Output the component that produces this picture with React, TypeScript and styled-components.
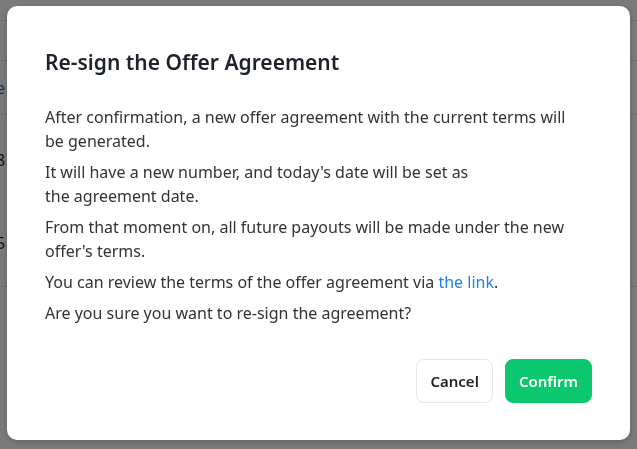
import React from "react";
import styled, { createGlobalStyle } from "styled-components";

const Global = createGlobalStyle`
  html, body { margin: 0; padding: 0; }
  body {
    width: 637px;
    height: 449px;
    overflow: hidden;
    background: #ffffff;
    font-family: "Noto Sans", "Open Sans", sans-serif;
  }
`;

const Page = styled.div`
  width: 637px;
  height: 449px;
  display: flex;
  flex-direction: column;
  font-family: "Noto Sans", sans-serif;
`;

const Row = styled.div<{ $h: number; $line?: boolean }>`
  height: ${(p) => p.$h}px;
  border-bottom: ${(p) => (p.$line === false ? "none" : "1px solid #e6e6e6")};
  display: flex;
  align-items: center;
  font-size: 16px;
  line-height: 22px;
  color: #1e2a3a;
  box-sizing: border-box;
`;

const Stack = styled.div`
  display: flex;
  flex-direction: column;
  align-self: flex-start;
  padding-top: 34px;
  gap: 61px;
`;

const Cell = styled.span<{ $blue?: boolean }>`
  margin-left: -4px;
  color: ${(p) => (p.$blue ? "#2f6fd6" : "#1e2a3a")};
`;

const Overlay = styled.div`
  position: fixed;
  inset: 0;
  background: rgba(0, 0, 0, 0.52);
  display: flex;
  align-items: flex-start;
  justify-content: flex-start;
  padding: 6px 0 0 7px;
  box-sizing: border-box;
`;

const Dialog = styled.div`
  width: 623px;
  height: 434px;
  box-sizing: border-box;
  background: #ffffff;
  border-radius: 10px;
  box-shadow: 0 2px 6px rgba(0, 0, 0, 0.2);
  padding: 38px 38px 37px 38px;
  display: flex;
  flex-direction: column;
`;

const Title = styled.h2`
  margin: 0;
  font-family: "Noto Sans", sans-serif;
  font-size: 21px;
  font-weight: 600;
  line-height: 36px;
  color: #1d222b;
`;

const Body = styled.div`
  margin-top: 25px;
  display: flex;
  flex-direction: column;
  gap: 7px;
  flex: 1;
`;

const Para = styled.p`
  margin: 0;
  font-family: "Noto Sans", sans-serif;
  font-size: 16px;
  line-height: 24px;
  color: #333333;
  max-width: 535px;
`;

const Link = styled.a`
  color: #1f7ef0;
  text-decoration: none;
`;

const Footer = styled.div`
  display: flex;
  justify-content: flex-end;
  gap: 12px;
`;

const Button = styled.button<{ $primary?: boolean }>`
  height: 44px;
  padding: 0 13px;
  border-radius: 8px;
  font-family: "Noto Sans", sans-serif;
  font-size: 15px;
  font-weight: 600;
  cursor: pointer;
  border: 1px solid ${(p) => (p.$primary ? "#0bc76e" : "#e4e6ea")};
  background: ${(p) => (p.$primary ? "#0bc76e" : "#ffffff")};
  color: ${(p) => (p.$primary ? "#ffffff" : "#1d222b")};
`;

export default function App() {
  return (
    <>
      <Global />
      <Page>
        <Row $h={21} />
        <Row $h={40} />
        <Row $h={54}>
          <Cell $blue>e</Cell>
        </Row>
        <Row $h={172}>
          <Stack>
            <Cell>8</Cell>
            <Cell>5</Cell>
          </Stack>
        </Row>
        <Row $h={162} $line={false} />
      </Page>
      <Overlay>
        <Dialog role="dialog">
          <Title>Re-sign the Offer Agreement</Title>
          <Body>
            <Para>
              After confirmation, a new offer agreement with the current terms will be generated.
            </Para>
            <Para>
              It will have a new number, and today's date will be set as
              <br />
              the agreement date.
            </Para>
            <Para>
              From that moment on, all future payouts will be made under the new offer's terms.
            </Para>
            <Para>
              You can review the terms of the offer agreement via <Link href="#">the link</Link>.
            </Para>
            <Para>Are you sure you want to re-sign the agreement?</Para>
          </Body>
          <Footer>
            <Button>Cancel</Button>
            <Button $primary>Confirm</Button>
          </Footer>
        </Dialog>
      </Overlay>
    </>
  );
}
